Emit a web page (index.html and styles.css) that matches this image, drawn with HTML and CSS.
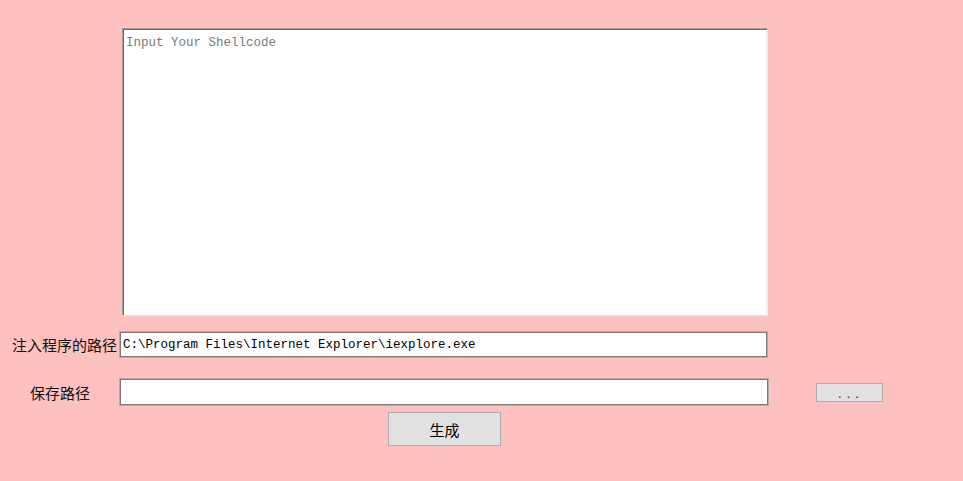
FILE: index.html
```html
<!DOCTYPE html>
<html>
<head>
<meta charset="utf-8">
<link rel="stylesheet" href="styles.css">
</head>
<body>
<div class="page">
  <div class="editor-row">
    <textarea class="editor" placeholder="Input Your Shellcode"></textarea>
  </div>
  <div class="form-row row-inject">
    <label class="lbl lbl-inject">注入程序的路径</label>
    <input class="field" type="text" value="C:\Program Files\Internet Explorer\iexplore.exe">
  </div>
  <div class="form-row row-save">
    <label class="lbl lbl-save">保存路径</label>
    <input class="field field-save" type="text" value="">
    <button class="btn btn-browse">...</button>
  </div>
  <div class="action-row">
    <button class="btn btn-gen">生成</button>
  </div>
</div>
</body>
</html>
```
FILE: styles.css
```css
html, body {
  margin: 0;
  padding: 0;
  background: #ffc0c0;
  width: 963px;
  height: 481px;
  overflow: hidden;
}
.page {
  padding-top: 28px;
  font-family: "Noto Sans CJK SC", "Noto Sans", sans-serif;
}
.editor-row {
  display: flex;
  padding-left: 122px;
}
.editor {
  box-sizing: border-box;
  width: 646px;
  height: 288px;
  margin: 0;
  resize: none;
  background: #fff;
  border-style: solid;
  border-width: 1px;
  border-color: #a0a0a0 #e8e8e8 #e8e8e8 #a0a0a0;
  box-shadow: inset 1px 1px 0 #696969, inset -1px -1px 0 #f4f4f4;
  padding: 7px 3px;
  font-family: "Liberation Mono", monospace;
  font-size: 12.5px;
  line-height: 15px;
  color: #333;
  outline: none;
}
.editor::placeholder {
  color: #7a7a7a;
}
.form-row {
  display: flex;
  align-items: center;
}
.row-inject {
  margin-top: 16px;
  height: 25px;
}
.row-save {
  margin-top: 22px;
  height: 26px;
}
.lbl {
  box-sizing: border-box;
  width: 120px;
  font-size: 15px;
  color: #111;
  white-space: nowrap;
}
.lbl-inject { padding-left: 12px; }
.lbl-save { padding-left: 30px; }
.field {
  box-sizing: border-box;
  width: 647px;
  height: 25px;
  margin: 0;
  border: 1px solid #7a7a7a;
  box-shadow: 0 0 0 1px #b8a8a8;
  background: #fff;
  padding: 0 2px;
  font-family: "Liberation Mono", monospace;
  font-size: 12.5px;
  color: #000;
  outline: none;
}
.field-save {
  width: 648px;
  height: 26px;
}
.btn {
  box-sizing: border-box;
  margin: 0;
  background: #e1e1e1;
  border: 1px solid #adadad;
  color: #000;
  padding: 0;
}
.btn-browse {
  width: 67px;
  height: 19px;
  margin-left: 48px;
  margin-top: 0;
  font-family: "Liberation Mono", monospace;
  font-size: 11px;
  line-height: 22px;
  letter-spacing: 2px;
  color: #333;
}
.action-row {
  display: flex;
  padding-left: 388px;
  margin-top: 7px;
}
.btn-gen {
  width: 113px;
  height: 34px;
  font-family: "Noto Sans CJK SC", sans-serif;
  font-size: 15px;
}
```
